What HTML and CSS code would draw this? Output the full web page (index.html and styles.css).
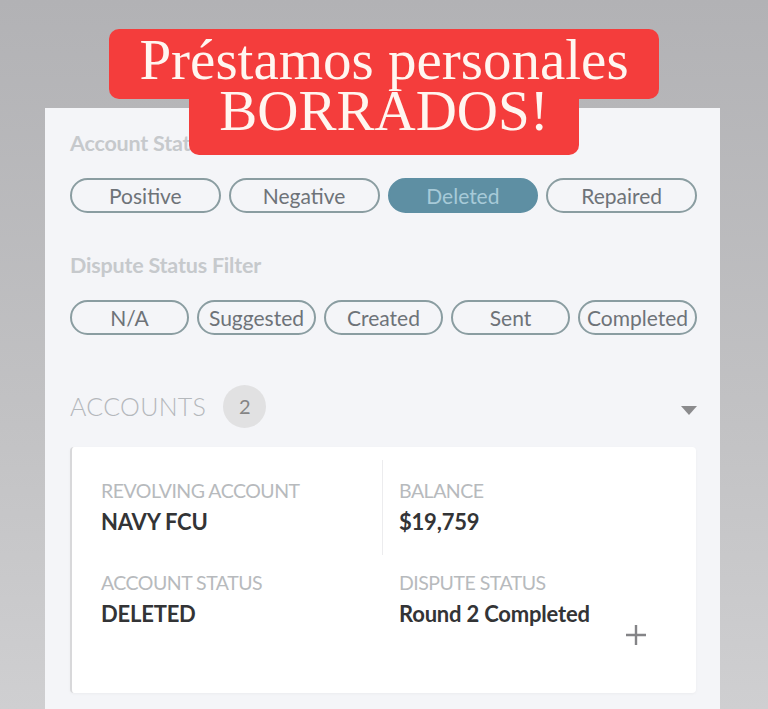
FILE: index.html
```html
<!DOCTYPE html>
<html lang="es">
<head>
    <meta charset="UTF-8">
    <meta name="viewport" content="width=device-width, initial-scale=1.0">
    <title>Préstamos personales BORRADOS!</title>
    <link rel="stylesheet" href="styles.css">
</head>
<body>
    <div class="banner">
        <div class="banner-line first">Préstamos personales</div>
        <div class="banner-line second">BORRADOS!</div>
    </div>
    <div class="panel">
        <h3 class="filter-label">Account Status Filter</h3>
        <div class="pill-row four">
            <span class="pill">Positive</span>
            <span class="pill">Negative</span>
            <span class="pill active">Deleted</span>
            <span class="pill">Repaired</span>
        </div>
        <h3 class="filter-label second">Dispute Status Filter</h3>
        <div class="pill-row five">
            <span class="pill">N/A</span>
            <span class="pill">Suggested</span>
            <span class="pill">Created</span>
            <span class="pill">Sent</span>
            <span class="pill">Completed</span>
        </div>
        <div class="accounts-header">
            <span class="accounts-title">ACCOUNTS</span>
            <span class="count-badge">2</span>
            <span class="caret"></span>
        </div>
        <div class="account-card">
            <div class="field divided">
                <div class="field-label">REVOLVING ACCOUNT</div>
                <div class="field-value">NAVY FCU</div>
            </div>
            <div class="field top">
                <div class="field-label">BALANCE</div>
                <div class="field-value">$19,759</div>
            </div>
            <div class="field">
                <div class="field-label">ACCOUNT STATUS</div>
                <div class="field-value">DELETED</div>
            </div>
            <div class="field">
                <div class="field-label">DISPUTE STATUS</div>
                <div class="field-value">Round 2 Completed</div>
            </div>
            <svg class="add-btn" width="22" height="22" viewBox="0 0 22 22">
                <path d="M11 1v20M1 11h20" stroke="#848487" stroke-width="2.4" fill="none"/>
            </svg>
        </div>
    </div>
</body>
</html>
```

FILE: styles.css
```css
html, body {
    margin: 0;
    padding: 0;
    width: 768px;
    height: 709px;
    overflow: hidden;
    font-family: 'Lato', 'Liberation Sans', sans-serif;
    background: linear-gradient(180deg, #b2b2b5 0%, #c2c2c4 60%, #cfcfd1 100%);
}
.banner {
    position: absolute;
    top: 29px;
    left: 0;
    width: 768px;
    display: flex;
    flex-direction: column;
    align-items: center;
    z-index: 2;
    font-family: 'Liberation Serif', 'DejaVu Serif', serif;
    font-size: 57px;
    color: #fff6f0;
}
.banner-line {
    background: #f43d3c;
    padding: 0 30px;
    white-space: nowrap;
}
.banner-line.first {
    line-height: 62px;
    padding-bottom: 8px;
    border-radius: 10px;
}
.banner-line.second {
    line-height: 26px;
    height: 26px;
    padding-bottom: 31px;
    margin-top: -1px;
    border-radius: 0 0 10px 10px;
}
.panel {
    margin: 108px 0 0 45px;
    width: 675px;
    height: 601px;
    box-sizing: border-box;
    padding: 23px 23px 0 25px;
    background: #f4f5f8;
}
.filter-label {
    margin: 0;
    font-size: 21.5px;
    line-height: 24px;
    font-weight: 700;
    color: #c6c9cc;
    letter-spacing: -0.2px;
}
.filter-label.second {
    margin-top: 40px;
}
.pill-row {
    display: grid;
    margin-top: 23px;
}
.pill-row.four {
    grid-template-columns: repeat(4, 1fr);
    column-gap: 8px;
}
.pill-row.five {
    grid-template-columns: repeat(5, 1fr);
    column-gap: 8px;
}
.pill {
    height: 35px;
    box-sizing: border-box;
    border: 2px solid #8a9da1;
    border-radius: 18px;
    display: flex;
    align-items: center;
    justify-content: center;
    font-size: 21px;
    color: #6e7378;
    white-space: nowrap;
}
.pill.active {
    background: #5e8fa3;
    border-color: #5e8fa3;
    color: #a7cad8;
}
.accounts-header {
    display: flex;
    align-items: center;
    margin-top: 49px;
    height: 44px;
}
.accounts-title {
    font-size: 25px;
    font-weight: 300;
    color: #b4b8bc;
    letter-spacing: 0.3px;
}
.count-badge {
    margin-left: 17px;
    width: 43px;
    height: 43px;
    border-radius: 50%;
    background: #e1e1e2;
    color: #858585;
    font-size: 20px;
    display: flex;
    align-items: center;
    justify-content: center;
}
.caret {
    margin-left: auto;
    margin-right: 0;
    margin-top: 9px;
    width: 0;
    height: 0;
    border-left: 8px solid transparent;
    border-right: 8px solid transparent;
    border-top: 9px solid #8b8b8d;
}
.account-card {
    position: relative;
    margin-top: 19px;
    width: 626px;
    height: 246px;
    box-sizing: border-box;
    background: #fff;
    border-left: 2px solid #d8d8da;
    border-radius: 4px;
    box-shadow: 0 1px 3px rgba(0, 0, 0, 0.04);
    padding: 13px 0 0 29px;
    display: grid;
    grid-template-columns: 282px 1fr;
    grid-template-rows: 95px auto;
}
.field {
    display: flex;
    flex-direction: column;
}
.field.divided,
.field.top {
    padding-top: 21px;
}
.field.divided {
    border-right: 1px solid #ececee;
}
.field:nth-child(2),
.field:nth-child(4) {
    padding-left: 16px;
}
.field:nth-child(3),
.field:nth-child(4) {
    padding-top: 18px;
}
.field-label {
    font-size: 19.5px;
    line-height: 20px;
    color: #b7babd;
    letter-spacing: -0.5px;
    white-space: nowrap;
}
.field-value {
    margin-top: 8px;
    font-size: 22px;
    line-height: 26px;
    font-weight: 700;
    color: #333436;
    letter-spacing: -0.2px;
    white-space: nowrap;
}
.add-btn {
    position: absolute;
    right: 49px;
    top: 177px;
}
```
